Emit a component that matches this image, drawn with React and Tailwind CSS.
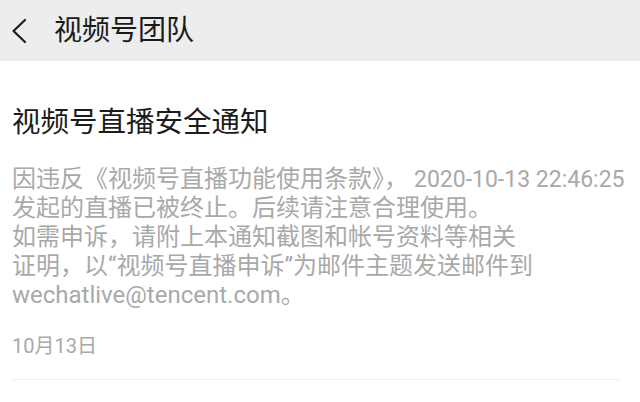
import React from "react";

const font = { fontFamily: "Roboto, 'Noto Sans CJK SC', sans-serif" };

const lines = [
    <>因违反《视频号直播功能使用条款》， <span className="text-[23px]">2020-10-13 22:46:25</span></>,
    "发起的直播已被终止。后续请注意合理使用。",
    "如需申诉，请附上本通知截图和帐号资料等相关",
    "证明，以“视频号直播申诉”为邮件主题发送邮件到",
    "wechatlive@tencent.com。",
];

const App = () => {
    return (
        <div className="w-[640px] h-[402px] bg-white overflow-hidden" style={font}>
            {/* Top bar */}
            <div className="h-[61px] bg-[#ededed] flex items-center">
                <svg className="ml-[9px] w-[20px] h-[26px]" viewBox="0 0 20 26" fill="none">
                    <path d="M16 2 L4.5 13 L16 24" stroke="#1c1c1c" strokeWidth="2.2" strokeLinecap="round" strokeLinejoin="round" />
                </svg>
                <div className="ml-[25px] text-[28px] text-[#1a1a1a] leading-none">视频号团队</div>
            </div>

            {/* Notice card */}
            <div className="px-[12px]">
                <h1 className="mt-[45px] text-[28.5px] leading-[34px] text-[#1c1c1c] font-normal">视频号直播安全通知</h1>
                <div className="mt-[25px] text-[24px] leading-[29px] text-[#a9a9a9]">
                    {lines.map((line, i) => (
                        <div key={i} className="whitespace-nowrap">{line}</div>
                    ))}
                </div>
                <div className="mt-[24px] text-[20px] leading-[24px] text-[#a9a9a9]">10月13日</div>
                <div className="mt-[21px] h-px bg-[#efefef] mr-[8px]" />
            </div>
        </div>
    );
};

export default App;
